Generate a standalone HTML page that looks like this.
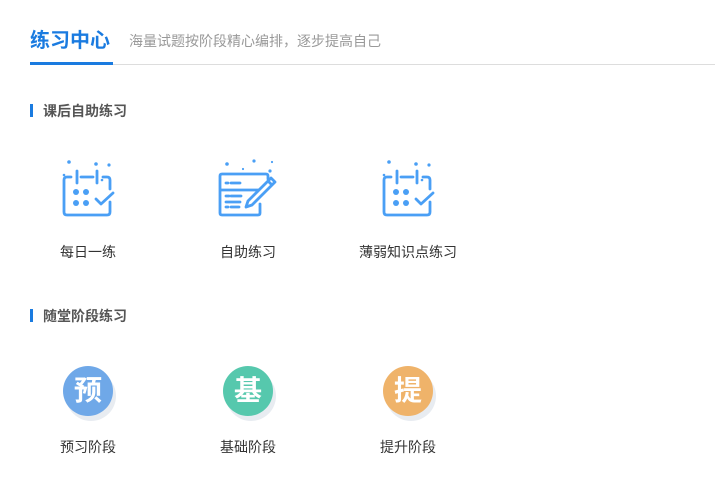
<!DOCTYPE html>
<html><head><meta charset="utf-8"><style>
body{margin:0;width:715px;height:484px;background:#fff;position:relative;overflow:hidden;font-family:"Liberation Sans","Noto Sans CJK SC",sans-serif}
.a{position:absolute;white-space:nowrap}
.t{left:30px;top:24px;font-size:20px;font-weight:bold;color:#1a7be0}
.s{left:129px;top:31px;font-size:14px;color:#999}
.h{font-size:14px;font-weight:bold;color:#555;left:43px}
.bar{left:30px;width:3px;height:13px;background:#1a7be0}
.l{font-size:14px;color:#333;width:120px;text-align:center}
.c{width:50px;height:50px;border-radius:50%;color:#fff;font-size:28px;font-weight:bold;text-align:center;line-height:50px;box-shadow:3px 5px 0 #e8ecf1}
</style></head><body>
<div class="a t">练习中心</div>
<div class="a s">海量试题按阶段精心编排，逐步提高自己</div>
<div class="a" style="left:30px;top:64px;width:685px;height:1px;background:#ddd"></div>
<div class="a" style="left:30px;top:62px;width:83px;height:3px;background:#1a7be0"></div>

<div class="a bar" style="top:104px"></div>
<div class="a h" style="top:101px">课后自助练习</div>
<div class="a bar" style="top:309px"></div>
<div class="a h" style="top:306px">随堂阶段练习</div>

<svg class="a" style="left:0;top:0" width="715" height="484" fill="none" stroke="#4a9ff5" stroke-width="2.8" stroke-linecap="round" stroke-linejoin="round">
<g id="cal">
<path d="M71 177h-4q-3 0-3 3v32q0 3 3 3h40q3 0 3-3v-10M110 189v-9q0-3-3-3h-4M81 177h12"/>
<path d="M77 171v12M97 171v12"/>
<path d="M96 199l5 5 12-11"/>
<g fill="#4a9ff5" stroke="none"><circle cx="76" cy="192" r="3"/><circle cx="86" cy="192" r="3"/><circle cx="76" cy="203" r="3"/><circle cx="86" cy="203" r="3"/><circle cx="69" cy="162" r="1.8"/><circle cx="96" cy="164" r="1.8"/><circle cx="109" cy="165" r="1.6"/><circle cx="64" cy="175" r="1.3"/><circle cx="102" cy="180" r="1.3"/></g>
</g>
<use href="#cal" x="320"/>
<g>
<path d="M260 204v9q0 2-2 2h-36q-2 0-2-2v-37q0-2 2-2h44q2 0 2 2v3M220 190h38"/>
<path d="M226 183h2M231 183h9M226 196h3M231 196h10M226 202h14M226 207h2M231 207h8"/>
<path d="M246 207l2-6 23-23 4 4-23 23z M268 181l4 4"/>
<g fill="#4a9ff5" stroke="none"><circle cx="227" cy="164" r="1.8"/><circle cx="254" cy="161" r="1.6"/><circle cx="272" cy="162" r="1.1"/><circle cx="243" cy="169" r="1.1"/><circle cx="270" cy="171" r="1.6"/></g>
</g>
</svg>

<div class="a l" style="left:28px;top:242px">每日一练</div>
<div class="a l" style="left:188px;top:242px">自助练习</div>
<div class="a l" style="left:348px;top:242px">薄弱知识点练习</div>

<div class="a c" style="left:63px;top:366px;background:#6fa8e8">预</div>
<div class="a c" style="left:223px;top:366px;background:#56c8ad">基</div>
<div class="a c" style="left:383px;top:366px;background:#efb36a">提</div>
<div class="a l" style="left:28px;top:437px">预习阶段</div>
<div class="a l" style="left:188px;top:437px">基础阶段</div>
<div class="a l" style="left:348px;top:437px">提升阶段</div>
</body></html>
